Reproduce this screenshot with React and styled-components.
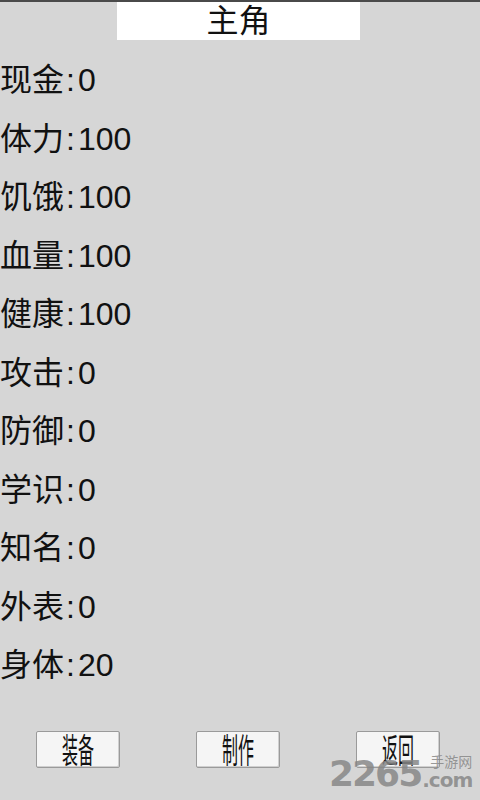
import React from 'react';
import styled, { createGlobalStyle } from 'styled-components';

const Global = createGlobalStyle`
  html, body {
    margin: 0;
    padding: 0;
    background: #d6d6d6;
  }
  body {
    font-family: "Liberation Sans", "Noto Sans CJK SC", sans-serif;
    color: #111;
  }
`;

const Screen = styled.div`
  position: relative;
  width: 480px;
  height: 800px;
  overflow: hidden;
  background: #d6d6d6;
  border-top: 2px solid #4a4a4a;
  box-sizing: border-box;
`;

const TitleBar = styled.div`
  display: flex;
  justify-content: center;
`;

const Title = styled.div`
  width: 243px;
  height: 38px;
  margin-left: -3px;
  background: #fff;
  display: flex;
  align-items: center;
  justify-content: center;
  font-size: 32px;
  line-height: 38px;
`;

const Stats = styled.div`
  display: flex;
  flex-direction: column;
  margin-top: 11px;
`;

const Stat = styled.div`
  font-size: 32px;
  line-height: 58.5px;
  height: 58.5px;
  white-space: nowrap;
`;

const Colon = styled.span`
  padding: 0 3px 0 2px;
`;

const Buttons = styled.div`
  display: flex;
  justify-content: space-between;
  padding: 0 40px 0 36px;
  margin-top: 36px;
`;

const Button = styled.button`
  width: 84px;
  height: 37px;
  padding: 0;
  background: #f5f5f5;
  border: 1px solid #9a9a9a;
  border-radius: 2px;
  box-shadow: inset -1px -1px 0 #cfcfcf;
  display: flex;
  align-items: center;
  justify-content: center;
  font-family: "Noto Sans CJK SC", sans-serif;
  color: #111;
`;

const ButtonLabel = styled.span`
  display: inline-block;
  font-size: 34px;
  line-height: 36px;
  transform: scaleX(0.47);
  white-space: nowrap;
`;

const Watermark = styled.div`
  position: absolute;
  left: 329px;
  top: 750px;
  display: flex;
  align-items: flex-end;
  color: rgba(135, 135, 135, 0.85);
  pointer-events: none;
  white-space: nowrap;
`;

const WmNumber = styled.span`
  font-family: "DejaVu Sans", sans-serif;
  font-weight: bold;
  font-size: 36px;
  line-height: 38px;
  letter-spacing: -2px;
`;

const WmSide = styled.div`
  display: flex;
  flex-direction: column;
  align-items: flex-end;
  margin-left: 1px;
`;

const WmCn = styled.span`
  font-family: "Noto Sans CJK SC", sans-serif;
  font-size: 14px;
  line-height: 18px;
`;

const WmCom = styled.span`
  font-family: "DejaVu Sans", sans-serif;
  font-weight: bold;
  font-size: 20px;
  line-height: 20px;
  letter-spacing: -1px;
  margin-bottom: 3px;
`;

const stats = [
  ['现金', 0],
  ['体力', 100],
  ['饥饿', 100],
  ['血量', 100],
  ['健康', 100],
  ['攻击', 0],
  ['防御', 0],
  ['学识', 0],
  ['知名', 0],
  ['外表', 0],
  ['身体', 20],
];

export default function App() {
  return (
    <Screen>
      <Global />
      <TitleBar>
        <Title>主角</Title>
      </TitleBar>
      <Stats>
        {stats.map(([name, value]) => (
          <Stat key={name}>
            {name}<Colon>:</Colon>{value}
          </Stat>
        ))}
      </Stats>
      <Buttons>
        <Button><ButtonLabel>装备</ButtonLabel></Button>
        <Button><ButtonLabel>制作</ButtonLabel></Button>
        <Button><ButtonLabel>返回</ButtonLabel></Button>
      </Buttons>
      <Watermark>
        <WmNumber>2265</WmNumber>
        <WmSide>
          <WmCn>手游网</WmCn>
          <WmCom>.com</WmCom>
        </WmSide>
      </Watermark>
    </Screen>
  );
}
